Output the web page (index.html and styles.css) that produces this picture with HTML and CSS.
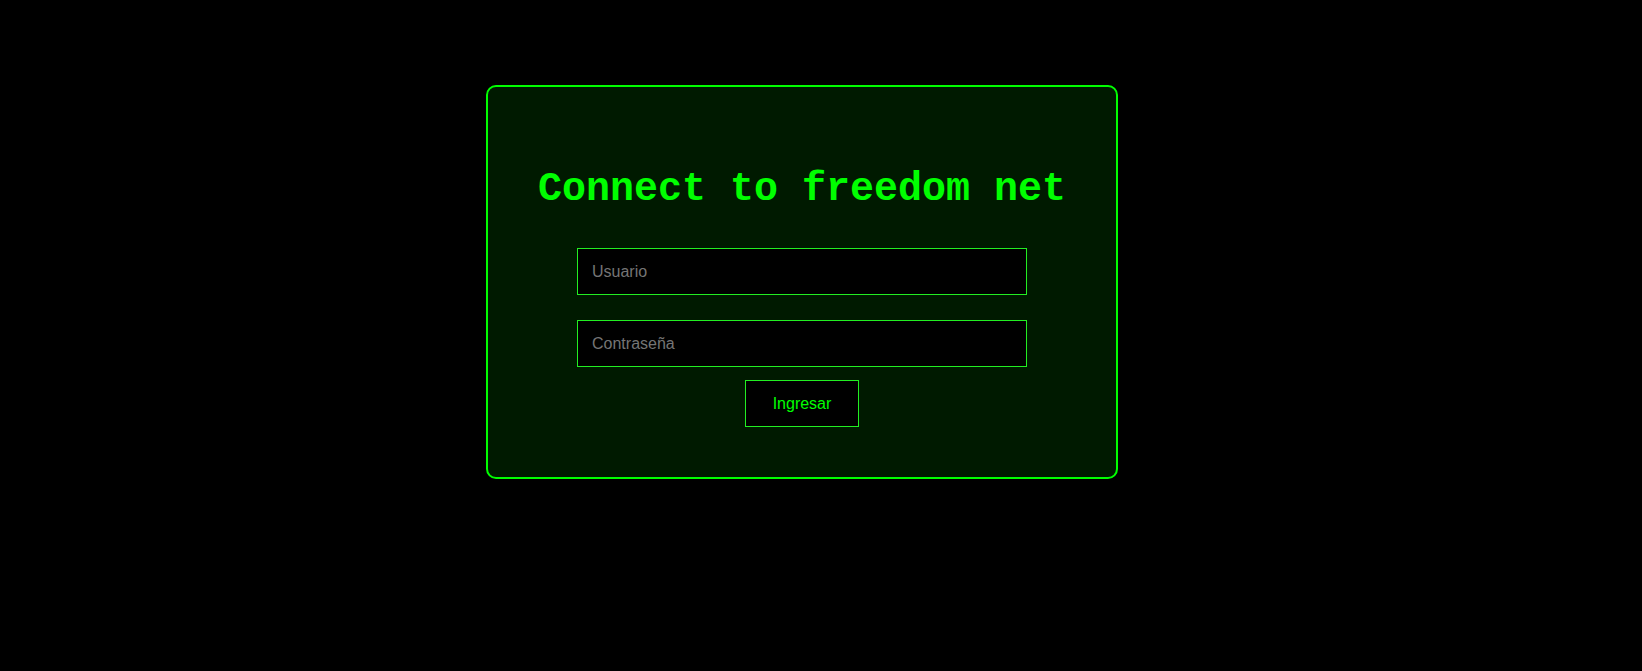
FILE: index.html
```html
<!DOCTYPE html>
<html lang="es">
<head>
<meta charset="utf-8">
<title>Connect to freedom net</title>
<link rel="stylesheet" href="styles.css">
</head>
<body>
  <main class="card">
    <h1 class="title">Connect to freedom net</h1>
    <form class="login">
      <input class="field" type="text" placeholder="Usuario">
      <input class="field" type="password" placeholder="Contraseña">
      <button class="submit" type="button">Ingresar</button>
    </form>
  </main>
</body>
</html>
```
FILE: styles.css
```css
html, body {
  margin: 0;
  background: #000;
}
body {
  font-family: "Liberation Sans", Arial, sans-serif;
  overflow: hidden;
}
.card {
  box-sizing: border-box;
  width: 632px;
  margin: 85px 0 0 486px;
  padding: 80px 0 50px;
  border: 2px solid #00ff00;
  border-radius: 10px;
  background: #001a00;
  display: flex;
  flex-direction: column;
  align-items: center;
}
.title {
  margin: 0 0 36px;
  font-family: "Liberation Mono", "Courier New", monospace;
  font-weight: bold;
  font-size: 40px;
  line-height: normal;
  color: #00ff00;
}
.login {
  display: flex;
  flex-direction: column;
  align-items: center;
}
.field {
  box-sizing: border-box;
  width: 450px;
  height: 47px;
  margin: 0 0 25px;
  padding: 0 14px;
  border: 1px solid #22ee22;
  background: #000;
  color: #00ff00;
  font-family: "Liberation Sans", Arial, sans-serif;
  font-size: 16px;
  outline: none;
}
.field:last-of-type {
  margin-bottom: 13px;
}
.field::placeholder {
  color: #757575;
}
.submit {
  box-sizing: border-box;
  width: 114px;
  height: 47px;
  padding: 0;
  border: 1px solid #22ee22;
  background: #000;
  color: #00ff00;
  font-family: "Liberation Sans", Arial, sans-serif;
  font-size: 16px;
  cursor: pointer;
}
```
